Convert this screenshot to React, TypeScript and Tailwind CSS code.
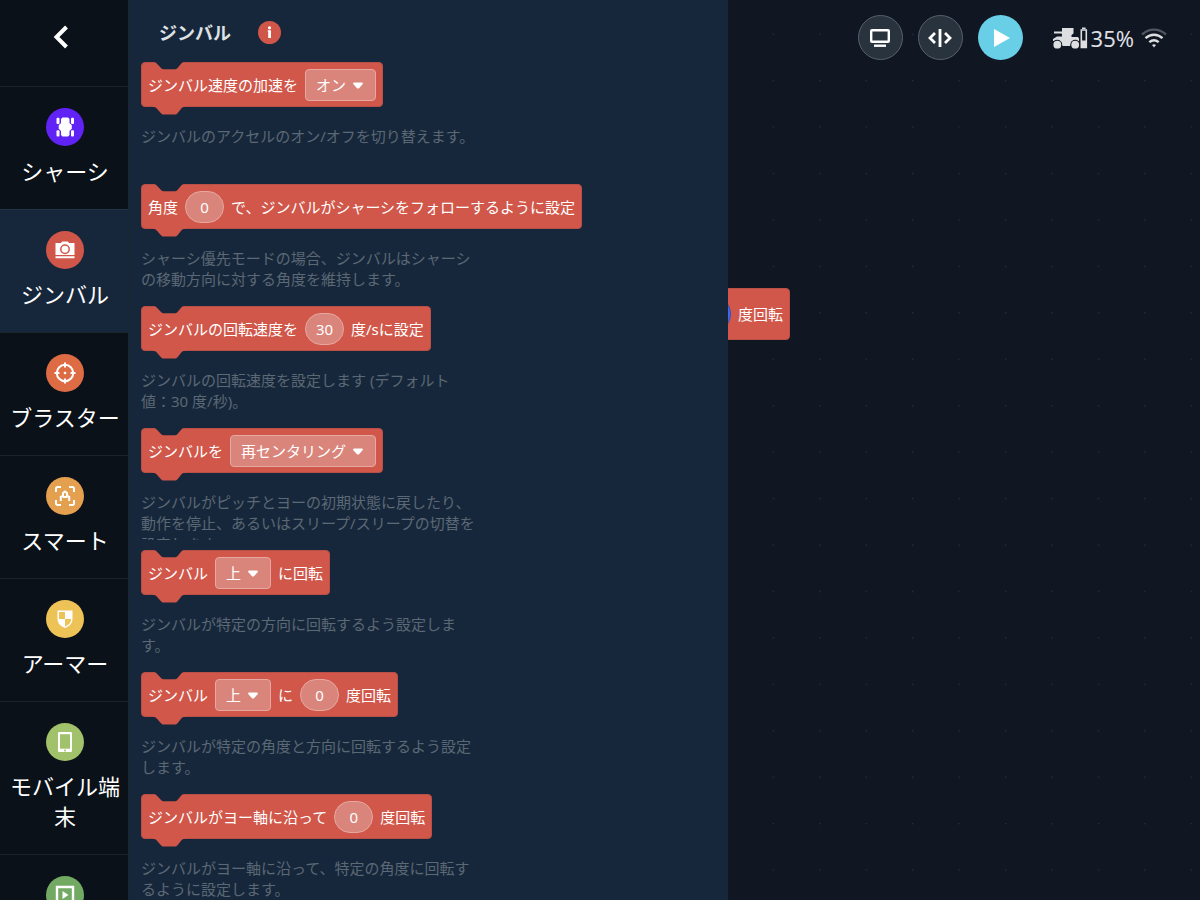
import React from "react";

type Part =
  | { kind: "text"; value: string }
  | { kind: "select"; options: string[]; width: string; label: string }
  | { kind: "number"; value: string; label: string };

type BlockDef = { id: string; parts: Part[]; help: string[] };

const t = (value: string): Part => ({ kind: "text", value });
const s = (label: string, width: string, options: string[]): Part => ({ kind: "select", label, width, options });
const n = (label: string, value: string): Part => ({ kind: "number", label, value });

const BLOCKS: BlockDef[] = [
  {
    id: "accel",
    parts: [t("ジンバル速度の加速を"), s("加速", "w-[71px]", ["オン"])],
    help: ["ジンバルのアクセルのオン/オフを切り替えます。"],
  },
  {
    id: "follow",
    parts: [t("角度"), n("角度", "0"), t("で、ジンバルがシャーシをフォローするように設定")],
    help: ["シャーシ優先モードの場合、ジンバルはシャーシ", "の移動方向に対する角度を維持します。"],
  },
  {
    id: "speed",
    parts: [t("ジンバルの回転速度を"), n("回転速度", "30"), t("度/sに設定")],
    help: ["ジンバルの回転速度を設定します (デフォルト", "値：30 度/秒)。"],
  },
  {
    id: "recenter",
    parts: [t("ジンバルを"), s("動作", "w-[146px]", ["再センタリング"])],
    help: [
      "ジンバルがピッチとヨーの初期状態に戻したり、",
      "動作を停止、あるいはスリープ/スリープの切替を",
      "設定します。",
    ],
  },
  {
    id: "rotate",
    parts: [t("ジンバル"), s("方向", "w-14", ["上"]), t("に回転")],
    help: ["ジンバルが特定の方向に回転するよう設定しま", "す。"],
  },
  {
    id: "rotate-deg",
    parts: [t("ジンバル"), s("方向", "w-14", ["上"]), t("に"), n("角度", "0"), t("度回転")],
    help: ["ジンバルが特定の角度と方向に回転するよう設定", "します。"],
  },
  {
    id: "yaw",
    parts: [t("ジンバルがヨー軸に沿って"), n("角度", "0"), t("度回転")],
    help: ["ジンバルがヨー軸に沿って、特定の角度に回転す", "るように設定します。"],
  },
];

function ChassisIcon() {
  return (
    <svg viewBox="0 0 38 38" className="size-full" fill="#fff" aria-hidden="true">
      <path d="M16.500 9.500h5.500l1.500 1.500v4l2.300 2.200v3.600L23.500 23v4L22 28.500h-5.500L15 27v-4l-2.300-2.200v-3.600L15 15v-4z" />
      <rect x="10.500" y="9.800" width="3" height="6.200" rx="1" />
      <rect x="25" y="9.800" width="3" height="6.200" rx="1" />
      <rect x="10.500" y="22.300" width="3" height="6.200" rx="1" />
      <rect x="25" y="22.300" width="3" height="6.200" rx="1" />
    </svg>
  );
}

function CameraIcon() {
  return (
    <svg viewBox="0 0 38 38" className="size-full" aria-hidden="true">
      <path fill="#fff" d="M9.500 12h5.500l1.200-1.500h5.600L23 12h5.500v12h-19zM9.500 25.300h19V27.300h-19z" />
      <circle cx="19" cy="18.200" r="4.200" fill="none" stroke="#d1564a" strokeWidth="1.500" />
    </svg>
  );
}

function TargetIcon() {
  return (
    <svg viewBox="0 0 38 38" className="size-full" fill="none" stroke="#fff" strokeWidth="2" aria-hidden="true">
      <circle cx="19" cy="19" r="8.200" />
      <path d="M19 8.500v5M19 24.500v5M8.500 19h5M24.500 19h5" />
      <circle cx="19" cy="19" r="1.300" fill="#fff" stroke="none" />
    </svg>
  );
}

function SmartIcon() {
  return (
    <svg viewBox="0 0 38 38" className="size-full" fill="none" stroke="#fff" strokeWidth="2" aria-hidden="true">
      <path d="M10 15v-3.500a1.500 1.500 0 0 1 1.500-1.500H15M23 10h3.500a1.500 1.500 0 0 1 1.500 1.500V15M28 23v3.500a1.500 1.500 0 0 1-1.500 1.500H23M15 28h-3.500a1.500 1.500 0 0 1-1.500-1.500V23" />
      <path d="M14.800 24v-4.200l2.200-1.300v-2.500l2-1.500 2 1.500v2.500l2.200 1.300V24M16.500 20h5" />
    </svg>
  );
}

function ShieldIcon() {
  return (
    <svg viewBox="0 0 38 38" className="size-full" aria-hidden="true">
      <path fill="#fff" d="M11.500 10.500h15v8.500c0 4.500-3.500 7.500-7.500 9-4-1.500-7.500-4.500-7.500-9z" />
      <path fill="#edc257" d="M13 12h6v7h-6zM19 19h6.200c0 3.800-2.900 6.200-6.200 7.500z" />
    </svg>
  );
}

function TabletIcon() {
  return (
    <svg viewBox="0 0 38 38" className="size-full" aria-hidden="true">
      <rect x="12" y="9" width="14" height="20" rx="1.200" fill="#fff" />
      <path fill="#a2c16b" d="M14 11.200h10v14.500H14z" />
      <circle cx="19" cy="27.400" r="1" fill="#a2c16b" />
    </svg>
  );
}

function MediaIcon() {
  return (
    <svg viewBox="0 0 38 38" className="size-full" aria-hidden="true">
      <path fill="none" stroke="#fff" strokeWidth="2.400" d="M11 11h16v17H11z" />
      <path fill="#fff" d="M16.500 15v8l6-4z" />
    </svg>
  );
}

const CATEGORIES = [
  { id: "chassis", label: "シャーシ", color: "bg-[#6123f5]", Icon: ChassisIcon },
  { id: "gimbal", label: "ジンバル", color: "bg-[#d1564a]", Icon: CameraIcon, active: true },
  { id: "blaster", label: "ブラスター", color: "bg-[#dd6c45]", Icon: TargetIcon },
  { id: "smart", label: "スマート", color: "bg-[#e5a04f]", Icon: SmartIcon },
  { id: "armor", label: "アーマー", color: "bg-[#edc257]", Icon: ShieldIcon },
  { id: "mobile", label: "モバイル端末", color: "bg-[#a2c16b]", Icon: TabletIcon },
  { id: "media", label: "", color: "bg-[#73aa63]", Icon: MediaIcon },
];

function Sidebar() {
  return (
    <nav className="flex w-[129px] shrink-0 flex-col overflow-hidden border-r border-[#1a2532] bg-[#0a1118]">
      <button type="button" aria-label="戻る" className="flex h-[86px] shrink-0 items-center justify-center pr-1.5 pb-3">
        <svg viewBox="0 0 16 24" className="h-6 w-4" fill="none" stroke="#fff" strokeWidth="4" aria-hidden="true">
          <path d="M13.500 2 3.500 12l10 10" />
        </svg>
      </button>
      {CATEGORIES.map(({ id, label, color, Icon, active }) => (
        <button
          key={id}
          type="button"
          aria-label={label || id}
          className={`flex min-h-[123px] shrink-0 flex-col items-center gap-2.5 border-t pt-[21px] pr-2 pb-[23px] pl-2.5 text-[22px] leading-[30px] text-white ${
            active ? "border-[#223348] bg-[#17273b]" : "border-[#1a232e]"
          }`}
        >
          <span className={`size-[38px] shrink-0 rounded-full ${color}`}>
            <Icon />
          </span>
          {label && <span>{label}</span>}
        </button>
      ))}
    </nav>
  );
}

function PartView({ part }: { part: Part }) {
  if (part.kind === "text") return <span>{part.value}</span>;
  if (part.kind === "number") {
    return (
      <input
        type="text"
        inputMode="numeric"
        aria-label={part.label}
        defaultValue={part.value}
        className="h-8 w-[39px] rounded-full border border-[#e6a8a0] bg-[#d9857b] text-center text-white"
      />
    );
  }
  return (
    <span className={`relative flex h-8 ${part.width}`}>
      <select
        aria-label={part.label}
        className="size-full appearance-none rounded-[4px] border border-[#e6a8a0] bg-[#d9857b] pl-2.5 text-white"
      >
        {part.options.map((o) => (
          <option key={o}>{o}</option>
        ))}
      </select>
      <svg viewBox="0 0 10 7" className="pointer-events-none absolute top-[13px] right-[13px] h-[7px] w-2.5" aria-hidden="true">
        <path fill="#fff" d="M1.200.5h7.600a1 1 0 0 1 .8 1.700L6.200 6a1.700 1.700 0 0 1-2.400 0L.4 2.200A1 1 0 0 1 1.200.5z" />
      </svg>
    </span>
  );
}

function Block({ block }: { block: BlockDef }) {
  return (
    <li className="h-[122px]">
      <div className="relative flex h-[45px] w-fit items-center gap-[7px] rounded-[4px] border border-[#b94f46] bg-[#d0574a] px-1.5 whitespace-nowrap text-white">
        <svg viewBox="0 0 32 8" className="absolute -top-px left-[11px] h-2 w-8" aria-hidden="true">
          <path fill="#17273b" d="M0 0h32c-2 0-2.700.5-3.500 1.300L24.500 6c-.8.800-1.500 1.200-2.500 1.200H10.500C9.500 7.200 8.800 6.800 8 6L3.500 1.300C2.700.5 2 0 0 0z" />
        </svg>
        <svg viewBox="0 0 32 9" className="absolute top-[43px] left-[11px] h-[9px] w-8" aria-hidden="true">
          <path fill="#d0574a" d="M0 0h32v1c-2 0-2.700.5-3.500 1.300L24.500 7.200c-.8.800-1.500 1.300-2.500 1.300H10.500c-1 0-1.700-.5-2.500-1.300L3.500 2.300C2.700 1.500 2 1 0 1z" />
        </svg>
        {block.parts.map((p, i) => (
          <PartView key={i} part={p} />
        ))}
      </div>
      <p className="mt-[19px] h-12 overflow-hidden leading-[21px] whitespace-pre text-[#5b6875]">
        {block.help.join("\n")}
      </p>
    </li>
  );
}

function Flyout() {
  return (
    <section className="flex w-[599px] shrink-0 flex-col overflow-hidden bg-[#17273b] pl-3">
      <header className="flex h-[62px] shrink-0 items-center gap-[27px] pt-[3px] pl-[18px]">
        <h1 className="text-[18px] leading-6 font-bold text-[#dfe1e3]">ジンバル</h1>
        <button type="button" aria-label="情報" className="size-[23px] rounded-full bg-[#d1564a]">
          <svg viewBox="0 0 23 23" className="size-full" fill="#fff" aria-hidden="true">
            <circle cx="11.500" cy="6.800" r="1.600" />
            <path d="M9.700 9.300h3.300v7.700h-2.800v-6.500h-.5z" />
          </svg>
        </button>
      </header>
      <ul className="text-[15px] leading-5">
        {BLOCKS.map((b) => (
          <Block key={b.id} block={b} />
        ))}
      </ul>
    </section>
  );
}

function StatusBar() {
  const round = "flex size-[45px] items-center justify-center rounded-full";
  return (
    <div className="relative flex items-center justify-end pt-[15px] pr-[33px]">
      <div className="flex gap-[15px]">
        <button type="button" aria-label="モニター" className={`${round} border border-[#56616d] bg-[#29333e]`}>
          <svg viewBox="0 0 22 20" className="h-5 w-[22px]" fill="none" stroke="#fff" strokeWidth="2.400" aria-hidden="true">
            <rect x="2.200" y="2.200" width="17.600" height="11.600" rx=".8" />
            <path d="M5 17.700h12" />
          </svg>
        </button>
        <button type="button" aria-label="コード" className={`${round} border border-[#56616d] bg-[#29333e]`}>
          <svg viewBox="0 0 26 20" className="h-5 w-[26px]" fill="none" stroke="#fff" strokeWidth="2.800" aria-hidden="true">
            <path d="M8 5 3 10l5 5M18 5l5 5-5 5M13 1v18" />
          </svg>
        </button>
        <button type="button" aria-label="実行" className={`${round} bg-[#69cfe7]`}>
          <svg viewBox="0 0 16 18" className="ml-1 h-[18px] w-4" fill="#fff" aria-hidden="true">
            <path d="M0 0v18l16-9z" />
          </svg>
        </button>
      </div>
      <div className="ml-[30px] flex items-center">
        <svg viewBox="0 0 35 22" className="h-[22px] w-[35px]" fill="#dcdee0" aria-hidden="true">
          <path d="M9 1h11.500v5.500L18.500 8v2H25l1 1.500V14l-5 1-3 2.500-1 1.500H9.500L8 15l-4-1.500-4 .5v-2l4-2.500h5V7.500L8.500 6.500H1v-2h8z" />
          <circle cx="4.300" cy="17.700" r="4.900" fill="#101722" />
          <circle cx="4.300" cy="17.700" r="3.900" />
          <circle cx="22.200" cy="17.700" r="4.900" fill="#101722" />
          <circle cx="22.200" cy="17.700" r="3.900" />
          <path fill="none" stroke="#dcdee0" strokeWidth="1.600" d="M28.300 3h5v17.500h-5zM29 1.300h3.600" />
          <path d="M28 13.500h6V21h-6z" />
        </svg>
        <span className="ml-[3px] text-[22px] leading-[30px] text-[#dcdee0]">35%</span>
        <svg viewBox="0 0 26 20" className="ml-[7px] h-5 w-[26px]" fill="none" stroke="#dcdee0" strokeWidth="2.400" aria-hidden="true">
          <path d="M1 6.500c7-6.500 17-6.500 24 0" stroke="#4f565f" />
          <path d="M4.500 10.200c5-4.700 12-4.700 17 0M8.300 14.200c3-2.600 6.400-2.600 9.400 0" />
          <path d="M11 17c1.300-.9 2.700-.9 4 0l-2 2.500z" fill="#dcdee0" stroke="none" />
        </svg>
      </div>
    </div>
  );
}

function Workspace() {
  return (
    <main className="relative min-w-0 flex-1 overflow-hidden bg-[#101722]">
      <svg className="absolute inset-0 size-full" aria-hidden="true">
        <defs>
          <pattern id="grid" x="44.700" y="33.500" width="46.440" height="46.440" patternUnits="userSpaceOnUse">
            <rect width="1.300" height="1.300" fill="#27313d" />
          </pattern>
        </defs>
        <rect width="100%" height="100%" fill="url(#grid)" />
      </svg>
      <div className="absolute top-72 -left-10 flex h-[52px] items-center gap-[7px] rounded-[4px] border border-[#b94f46] bg-[#d0574a] pr-1.5 text-[15px] text-white">
        <span className="h-9 w-[42px] rounded-full border border-[#3a4fb0] bg-[#4169ee]" />
        <span>度回転</span>
      </div>
      <StatusBar />
    </main>
  );
}

export default function App() {
  return (
    <div className="flex h-screen overflow-hidden bg-[#101722] font-['Noto_Sans','Noto_Sans_CJK_JP',sans-serif]" lang="ja">
      <Sidebar />
      <Flyout />
      <Workspace />
    </div>
  );
}
